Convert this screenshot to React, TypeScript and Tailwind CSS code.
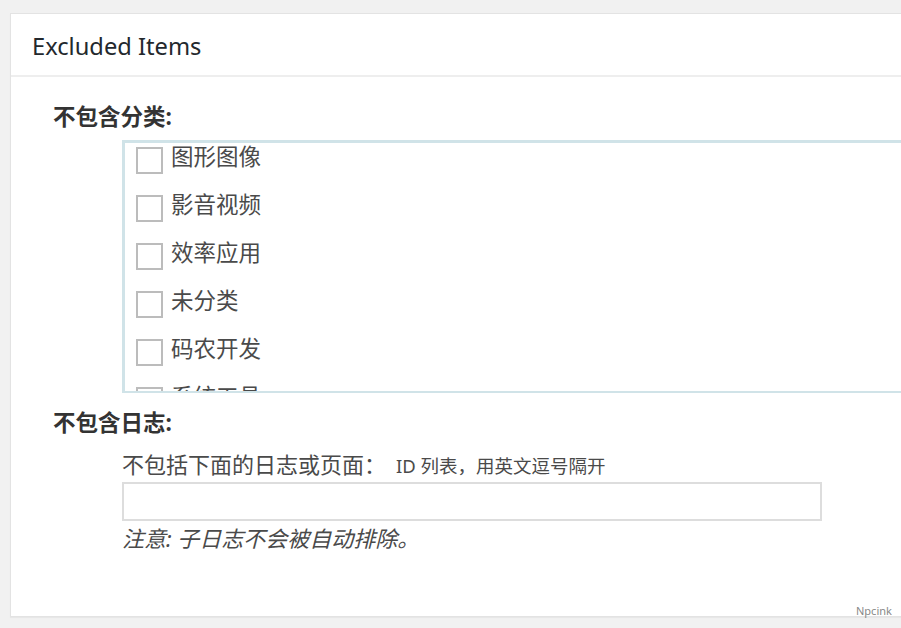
import React from "react";

const cats = ["图形图像", "影音视频", "效率应用", "未分类", "码农开发", "系统工具"];

export default function App() {
  return (
    <div
      className="w-[901px] h-[628px] overflow-hidden bg-[#f1f1f1] relative"
      style={{ fontFamily: '"Noto Sans", "Noto Sans CJK SC", sans-serif' }}
    >
      <div className="ml-[10px] mt-[13px] w-[1000px] h-[604px] bg-white border border-[#e3e3e3] shadow-[0_1px_1px_rgba(0,0,0,0.04)]">
        <div className="h-[63px] border-b-2 border-[#eeeeee] flex items-center pl-[21px] pt-[5px]">
          <h2 className="text-[23.7px] text-[#23282d] leading-none">Excluded Items</h2>
        </div>
        <div className="pl-[42px] pt-[26px]">
          <div className="text-[22.5px] font-bold text-[#333] leading-[28px]">不包含分类:</div>
          <div className="ml-[69px] mt-[9px] h-[253px] border-t-[3px] border-l-[3px] border-b-[2px] border-[#d0e3e8] overflow-hidden">
            <div className="pt-[4px] pl-[11px] flex flex-col gap-[21px]">
              {cats.map((c) => (
                <label key={c} className="flex items-center h-[27px]">
                  <span className="w-[27px] h-[27px] border-2 border-[#bcbcbc] bg-white shrink-0" />
                  <span className="ml-[8px] -mt-[6px] text-[22.5px] text-[#4a4a4a] leading-none">{c}</span>
                </label>
              ))}
            </div>
          </div>
          <div className="mt-[16px] text-[22.5px] font-bold text-[#333] leading-[28px]">不包含日志:</div>
          <div className="ml-[69px] mt-[13px]">
            <div className="flex items-baseline text-[#4a4a4a]">
              <span className="text-[22px] leading-[28px]">不包括下面的日志或页面：</span>
              <span className="ml-[10px] text-[18.5px] leading-[28px]">ID 列表，用英文逗号隔开</span>
            </div>
            <div className="mt-[2px] w-[700px] h-[39px] border-2 border-[#dddddd] bg-white" />
            <div className="mt-[1px] text-[22px] italic text-[#4a4a4a] leading-[32px]">注意: 子日志不会被自动排除。</div>
          </div>
        </div>
      </div>
      <div className="absolute left-[856px] top-[603px] text-[11px] text-[#888]">Npcink</div>
    </div>
  );
}
